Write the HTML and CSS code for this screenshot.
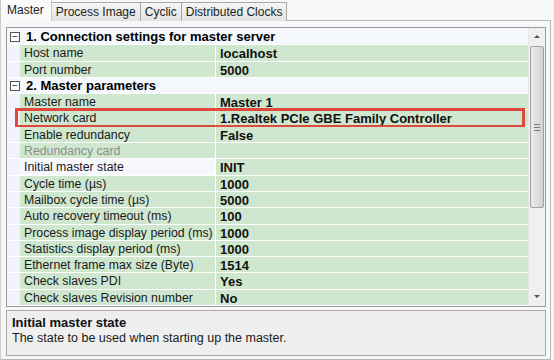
FILE: index.html
```html
<!DOCTYPE html>
<html lang="en">
<head>
  <meta charset="UTF-8" />
  <title>Master settings</title>
  <link rel="stylesheet" href="styles.css">
</head>
<body>
  <div class="tabs">
    <div class="tab active">Master</div>
    <div class="tab">Process Image</div>
    <div class="tab">Cyclic</div>
    <div class="tab">Distributed Clocks</div>
  </div>

  <div class="page">
    <div class="grid">
      <div class="rows">
        <div class="cat"><span class="toggle">&minus;</span>1. Connection settings for master server</div>
        <div class="row"><div class="gutter"></div><div class="label">Host name</div><div class="value">localhost</div></div>
        <div class="row"><div class="gutter"></div><div class="label">Port number</div><div class="value">5000</div></div>
        <div class="cat"><span class="toggle">&minus;</span>2. Master parameters</div>
        <div class="row"><div class="gutter"></div><div class="label">Master name</div><div class="value">Master 1</div></div>
        <div class="row hl"><div class="gutter"></div><div class="label">Network card</div><div class="value">1.Realtek PCIe GBE Family Controller</div></div>
        <div class="row"><div class="gutter"></div><div class="label">Enable redundancy</div><div class="value">False</div></div>
        <div class="row"><div class="gutter"></div><div class="label disabled">Redundancy card</div><div class="value"></div></div>
        <div class="row"><div class="gutter"></div><div class="label selected">Initial master state</div><div class="value">INIT</div></div>
        <div class="row"><div class="gutter"></div><div class="label">Cycle time (µs)</div><div class="value">1000</div></div>
        <div class="row"><div class="gutter"></div><div class="label">Mailbox cycle time (µs)</div><div class="value">5000</div></div>
        <div class="row"><div class="gutter"></div><div class="label">Auto recovery timeout (ms)</div><div class="value">100</div></div>
        <div class="row"><div class="gutter"></div><div class="label">Process image display period (ms)</div><div class="value">1000</div></div>
        <div class="row"><div class="gutter"></div><div class="label">Statistics display period (ms)</div><div class="value">1000</div></div>
        <div class="row"><div class="gutter"></div><div class="label">Ethernet frame max size (Byte)</div><div class="value">1514</div></div>
        <div class="row"><div class="gutter"></div><div class="label">Check slaves PDI</div><div class="value">Yes</div></div>
        <div class="row"><div class="gutter"></div><div class="label">Check slaves Revision number</div><div class="value">No</div></div>
      </div>
      <div class="scrollbar">
        <div class="arrow up"></div>
        <div class="track">
          <div class="thumb"><span class="grip"></span></div>
        </div>
        <div class="arrow down"></div>
      </div>
    </div>

    <div class="desc">
      <div class="desc-title">Initial master state</div>
      <div class="desc-text">The state to be used when starting up the master.</div>
    </div>
  </div>
</body>
</html>
```

FILE: styles.css
```css
body {
  margin: 0;
  background-color: #f7f7f7;
  font-family: "Liberation Sans", Arial, sans-serif;
  font-size: 13px;
  color: #111;
  width: 554px;
  height: 360px;
  overflow: hidden;
}
.tabs {
  display: flex;
  height: 21px;
  align-items: flex-end;
}
.tab {
  height: 18px;
  line-height: 18px;
  padding: 0 4px;
  font-size: 12px;
  border: 1px solid #a9a9a9;
  border-bottom: none;
  margin-left: -1px;
  background: linear-gradient(#f5f5f5, #e3e3e3);
  color: #222;
}
.tab.active {
  height: 21px;
  line-height: 20px;
  background: #fafafa;
  border-color: #c8c8c8;
  border-top: none;
  margin-left: 0;
  padding: 0 7px 0 6px;
  position: relative;
  z-index: 1;
}
.page {
  height: 332px;
  border: 1px solid #b9b9b9;
  border-left-color: #d0d0d0;
  margin-right: 3px;
  margin-top: -1px;
  padding: 6px 4px 0 5px;
}
.grid {
  display: flex;
  height: 278px;
  border: 1px solid #9a9a9a;
  background: #f4f7fc;
}
.rows {
  flex: 1;
  padding-top: 1px;
}
.cat {
  height: 15.3px;
  line-height: 16px;
  border-bottom: 1px solid #fff;
  font-weight: bold;
  font-size: 13px;
  display: flex;
  align-items: center;
  padding-left: 3px;
  color: #000;
}
.toggle {
  width: 8px;
  height: 8px;
  border: 1px solid #555;
  background: #fff;
  font-size: 10px;
  line-height: 7px;
  font-weight: normal;
  text-align: center;
  margin-right: 6px;
  color: #222;
}
.row {
  display: flex;
  height: 15.3px;
  line-height: 17px;
  border-bottom: 1px solid #fff;
  position: relative;
}
.gutter {
  width: 13px;
  background: #f0f4fa;
}
.label {
  width: 191px;
  padding-left: 4px;
  background: #cfe7cf;
  border-right: 1px solid #fff;
  white-space: nowrap;
  font-size: 12.3px;
  color: #1a1a1a;
}
.label.disabled {
  color: #8c8c8c;
}
.label.selected {
  background: #f6f8fd;
}
.value {
  flex: 1;
  padding-left: 4px;
  background: #cfe7cf;
  font-weight: bold;
  white-space: nowrap;
  color: #111;
}
.row.hl::after {
  content: "";
  position: absolute;
  left: 8px;
  right: 3px;
  top: -2px;
  bottom: -2px;
  border: 3px solid #e0483c;
}
.scrollbar {
  width: 16px;
  display: flex;
  flex-direction: column;
  background: #f0f0f0;
  border-left: 1px solid #e6e6e6;
}
.arrow {
  height: 17px;
  position: relative;
}
.arrow::before {
  content: "";
  position: absolute;
  left: 5px;
  border-left: 3px solid transparent;
  border-right: 3px solid transparent;
}
.arrow.up::before {
  top: 7px;
  border-bottom: 3px solid #555;
}
.arrow.down::before {
  top: 6px;
  border-top: 3px solid #555;
}
.track {
  flex: 1;
}
.thumb {
  margin: 1px 1px 0 1px;
  height: 160px;
  border: 1px solid #a2a2a2;
  border-radius: 2px;
  background: linear-gradient(90deg, #ececec, #dcdcdc 60%, #d0d0d0);
  display: flex;
  align-items: center;
  justify-content: center;
}
.grip {
  width: 6px;
  height: 5px;
  border-top: 1px solid #777;
  border-bottom: 1px solid #777;
  position: relative;
}
.grip::after {
  content: "";
  position: absolute;
  left: 0;
  right: 0;
  top: 2px;
  border-top: 1px solid #777;
}
.desc {
  margin-top: 3px;
  height: 41px;
  border: 1px solid #a9a9a9;
  background: #efefef;
  padding: 3px 5px 0;
}
.desc-title {
  font-weight: bold;
  line-height: 17px;
  color: #111;
}
.desc-text {
  line-height: 15px;
  font-size: 12.5px;
  color: #1a1a1a;
}
```
